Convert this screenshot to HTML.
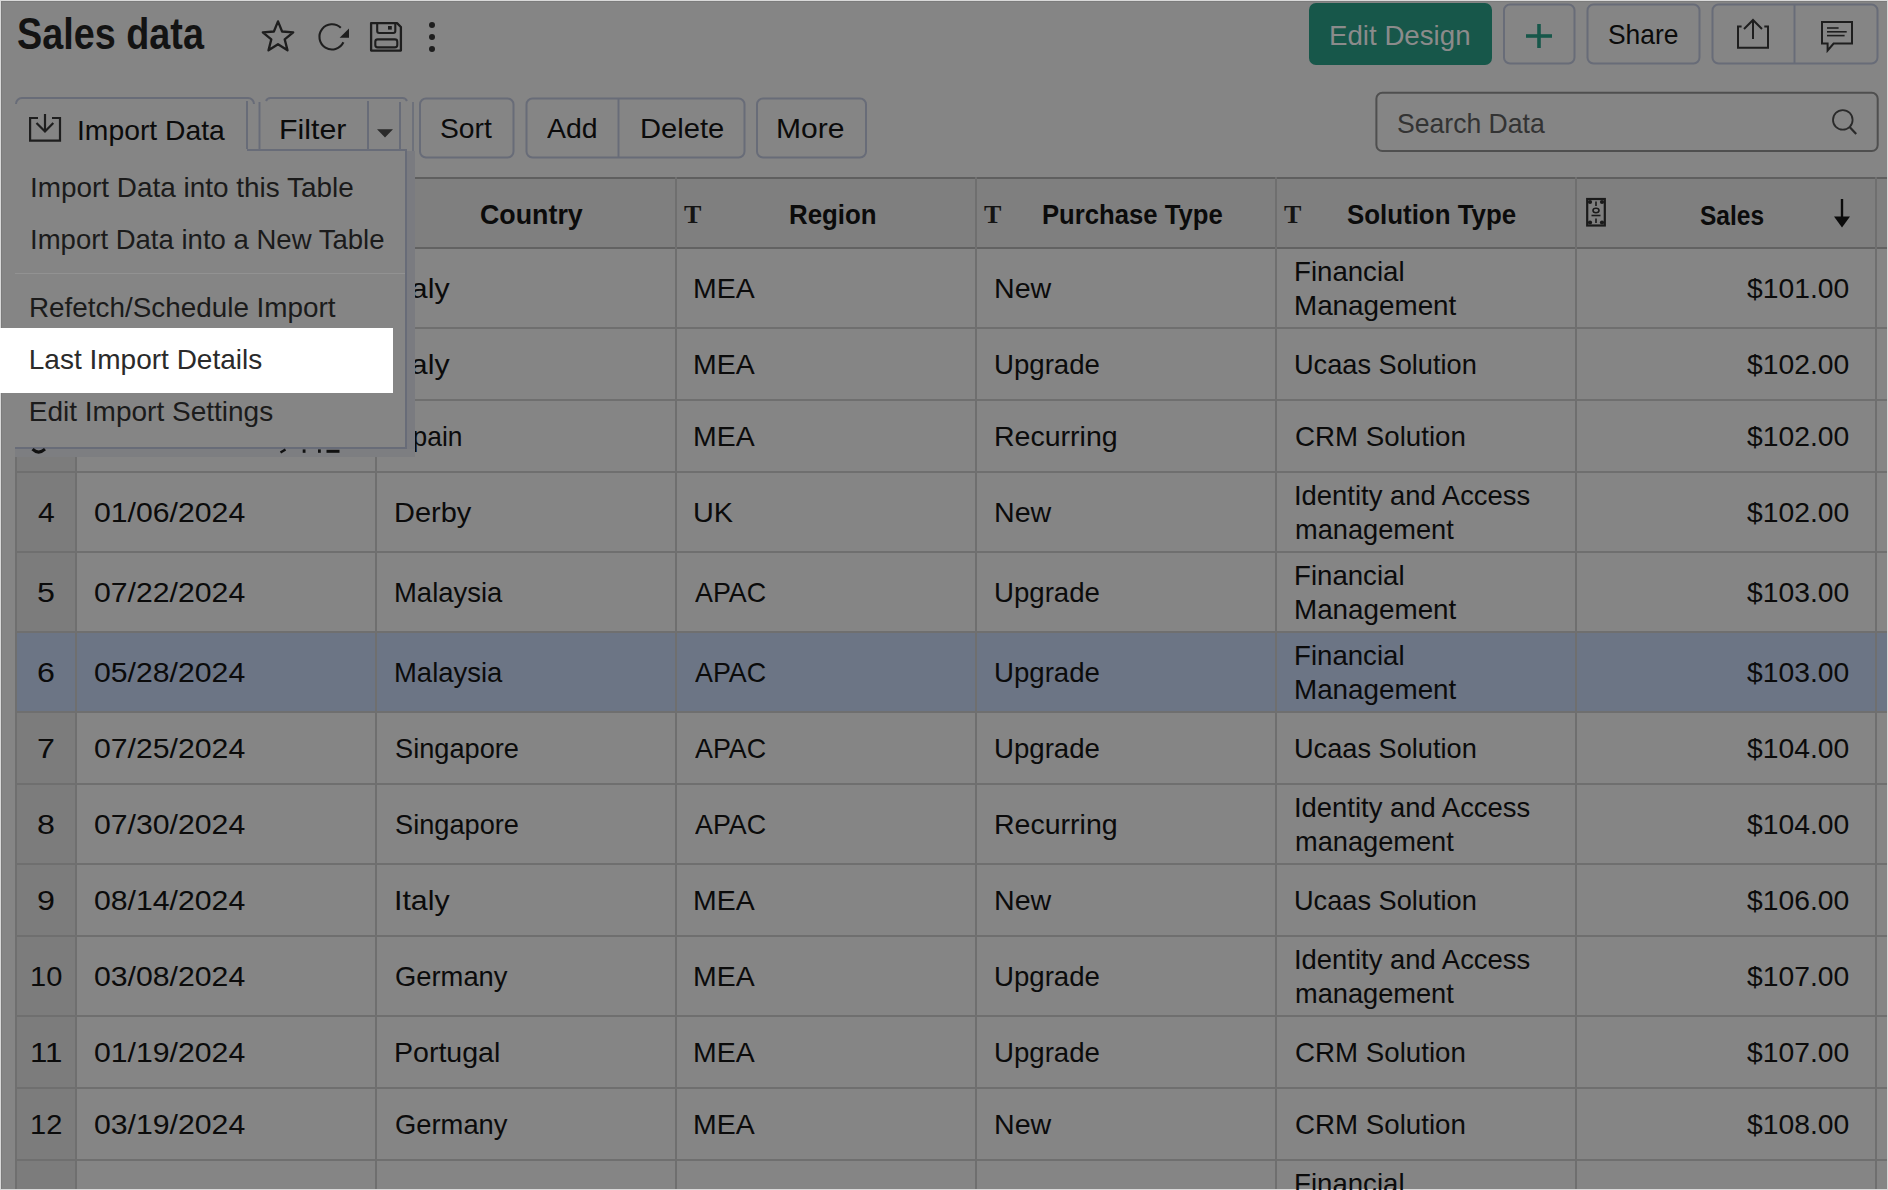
<!DOCTYPE html>
<html><head><meta charset="utf-8">
<style>
html,body{margin:0;padding:0;}
body{width:1888px;height:1190px;position:relative;overflow:hidden;background:#d9d9d9;font-family:"Liberation Sans",sans-serif;}
.a{position:absolute;box-sizing:border-box;}
.t{position:absolute;white-space:nowrap;transform-origin:0 0;font-family:"Liberation Sans",sans-serif;}
.hl{position:absolute;left:0;height:2px;background:#6f6f6f;}
.vl{position:absolute;top:177px;width:2px;height:1012px;background:#6f6f6f;}
.btn{position:absolute;box-sizing:border-box;border:2px solid #686c78;border-radius:7px;}
svg{position:absolute;left:0;top:0;}
</style></head><body>
<!-- page (dimmed) -->
<div class="a" style="left:1px;top:1px;width:1886px;height:1188px;background:#858585;overflow:hidden;box-shadow:inset 1px 1px 0 #7b7b7b">
</div>

<!-- ============ TABLE ============ -->
<div class="a" style="left:15px;top:177px;width:1872px;height:1012px;overflow:hidden;z-index:1" id="tbl">
  <!-- header bg -->
  <div class="a" style="left:0;top:0;width:1872px;height:72px;background:#7f7f7f"></div>
  <!-- row number column bg -->
  <div class="a" style="left:0;top:72px;width:61px;height:1000px;background:#7c7c7c"></div>
  <!-- selected row -->
  <div class="a" style="left:0;top:456px;width:1872px;height:80px;background:#6c7585"></div>
  <!-- horizontal lines -->
  <div class="hl" style="top:0;width:1872px;background:#5f5f5f"></div>
  <div class="hl" style="top:70px;width:1872px;background:#626262"></div>
  <div class="hl" style="top:150px;width:1872px"></div>
  <div class="hl" style="top:222px;width:1872px"></div>
  <div class="hl" style="top:294px;width:1872px"></div>
  <div class="hl" style="top:374px;width:1872px"></div>
  <div class="hl" style="top:454px;width:1872px"></div>
  <div class="hl" style="top:534px;width:1872px"></div>
  <div class="hl" style="top:606px;width:1872px"></div>
  <div class="hl" style="top:686px;width:1872px"></div>
  <div class="hl" style="top:758px;width:1872px"></div>
  <div class="hl" style="top:838px;width:1872px"></div>
  <div class="hl" style="top:910px;width:1872px"></div>
  <div class="hl" style="top:982px;width:1872px"></div>
  <!-- vertical lines -->
  <div class="vl" style="left:0;top:0"></div>
  <div class="vl" style="left:60px;top:0"></div>
  <div class="vl" style="left:360px;top:0"></div>
  <div class="vl" style="left:660px;top:0"></div>
  <div class="vl" style="left:960px;top:0"></div>
  <div class="vl" style="left:1260px;top:0"></div>
  <div class="vl" style="left:1560px;top:0"></div>
  <div class="vl" style="left:1860px;top:0"></div>
</div>

<!-- header icons -->
<div class="t" style="left:684px;top:202px;font-family:'Liberation Serif',serif;font-weight:700;font-size:26px;line-height:26px;color:#141414;z-index:2">T</div>
<div class="t" style="left:984px;top:202px;font-family:'Liberation Serif',serif;font-weight:700;font-size:26px;line-height:26px;color:#141414;z-index:2">T</div>
<div class="t" style="left:1284px;top:202px;font-family:'Liberation Serif',serif;font-weight:700;font-size:26px;line-height:26px;color:#141414;z-index:2">T</div>
<svg width="1888" height="1190" style="z-index:2">
  <!-- money icon -->
  <rect x="1587.2" y="199" width="17.6" height="26.5" fill="none" stroke="#1a1a1a" stroke-width="2.2"/>
  <circle cx="1590" cy="202" r="2.1" fill="#1a1a1a"/><circle cx="1602" cy="202" r="2.1" fill="#1a1a1a"/>
  <circle cx="1590" cy="222.5" r="2.1" fill="#1a1a1a"/><circle cx="1602" cy="222.5" r="2.1" fill="#1a1a1a"/>
  <line x1="1596" y1="201.5" x2="1596" y2="206" stroke="#1a1a1a" stroke-width="1.6"/>
  <ellipse cx="1596" cy="210.5" rx="3" ry="2.2" fill="none" stroke="#1a1a1a" stroke-width="1.6"/>
  <line x1="1591.5" y1="215.5" x2="1600.5" y2="215.5" stroke="#1a1a1a" stroke-width="1.6"/>
  <line x1="1596" y1="218.5" x2="1596" y2="223" stroke="#1a1a1a" stroke-width="1.6"/>
  <!-- sort arrow -->
  <line x1="1842" y1="199" x2="1842" y2="219" stroke="#0b0b0b" stroke-width="2.4"/>
  <polygon points="1834,216.5 1850,216.5 1842,227.5" fill="#0b0b0b"/>
</svg>

<!-- ============ TOP BAR ============ -->
<svg width="1888" height="1190" style="z-index:3">
  <!-- star -->
  <polygon points="278.0,21.4 282.1,31.5 293.2,32.3 284.7,39.4 287.5,50.3 278.0,44.2 268.5,50.3 271.3,39.4 262.8,32.3 273.9,31.5" fill="none" stroke="#1e1e1e" stroke-width="2.3" stroke-linejoin="round"/>
  <!-- refresh -->
  <path d="M343.4,42.3 A12.6,12.6 0 1 1 340.8,27.8" fill="none" stroke="#1e1e1e" stroke-width="2.1"/>
  <polygon points="349,28.4 349,37.8 339.6,37.8" fill="#1e1e1e"/>
  <!-- save -->
  <path d="M371.1,23.1 H397 L400.9,27 V50.6 H371.1 Z" fill="none" stroke="#1e1e1e" stroke-width="2.3" stroke-linejoin="round"/>
  <path d="M377.2,23.1 V31 a2,2 0 0 0 2,2 H393.3 a2,2 0 0 0 2,-2 V23.1" fill="none" stroke="#1e1e1e" stroke-width="2.1"/>
  <rect x="388" y="26" width="3.8" height="3.6" fill="#1e1e1e"/>
  <rect x="375.3" y="39.4" width="22" height="8" rx="2.4" fill="none" stroke="#1e1e1e" stroke-width="2.1"/>
  <!-- dots -->
  <circle cx="432" cy="25" r="3" fill="#1e1e1e"/>
  <circle cx="432" cy="37" r="3" fill="#1e1e1e"/>
  <circle cx="432" cy="49" r="3" fill="#1e1e1e"/>
  <!-- Edit design button -->
  <rect x="1309" y="3" width="183" height="62" rx="7" fill="#17574a"/>
  <!-- plus button -->
  <rect x="1504" y="4.5" width="70.5" height="59" rx="6" fill="none" stroke="#686c78" stroke-width="2"/>
  <line x1="1526" y1="36" x2="1552" y2="36" stroke="#17574a" stroke-width="3.6"/>
  <line x1="1539" y1="24" x2="1539" y2="48" stroke="#17574a" stroke-width="3.6"/>
  <!-- share -->
  <rect x="1587.5" y="4.5" width="112" height="59" rx="6" fill="none" stroke="#686c78" stroke-width="2"/>
  <!-- icon group -->
  <rect x="1712.5" y="4.5" width="165" height="59" rx="6" fill="none" stroke="#686c78" stroke-width="2"/>
  <line x1="1794.5" y1="4" x2="1794.5" y2="64" stroke="#686c78" stroke-width="2"/>
  <!-- export icon -->
  <path d="M1741.6,26.5 H1738 V47.8 H1768 V26.5 H1764.3" fill="none" stroke="#1e1e1e" stroke-width="2"/>
  <line x1="1753" y1="20" x2="1753" y2="39" stroke="#1e1e1e" stroke-width="2"/>
  <path d="M1744,29 L1753,20 L1762,29" fill="none" stroke="#1e1e1e" stroke-width="2"/>
  <!-- comment icon -->
  <path d="M1822,22 H1852 V43.5 H1833.6 L1827.6,50.5 V43.5 H1822 Z" fill="none" stroke="#1e1e1e" stroke-width="2"/>
  <line x1="1827" y1="28" x2="1838.6" y2="28" stroke="#1e1e1e" stroke-width="1.6"/>
  <line x1="1827" y1="31.8" x2="1846.7" y2="31.8" stroke="#1e1e1e" stroke-width="1.6"/>
  <line x1="1827" y1="35.6" x2="1844.6" y2="35.6" stroke="#1e1e1e" stroke-width="1.6"/>

  <!-- toolbar buttons -->
  <rect x="420" y="98.5" width="93.5" height="59" rx="6" fill="none" stroke="#686c78" stroke-width="2"/>
  <rect x="526.5" y="98.5" width="218" height="59" rx="6" fill="none" stroke="#686c78" stroke-width="2"/>
  <line x1="618.5" y1="98" x2="618.5" y2="158" stroke="#686c78" stroke-width="2"/>
  <rect x="757" y="98.5" width="109" height="59" rx="6" fill="none" stroke="#686c78" stroke-width="2"/>
  <!-- filter group (bottom hidden by menu) -->
  <path d="M266,101 a5,5 0 0 1 5,-3 H402 a5,5 0 0 1 5,3" fill="none" stroke="#686c78" stroke-width="2"/>
  <line x1="259.5" y1="102" x2="259.5" y2="151" stroke="#686c78" stroke-width="2"/>
  <line x1="400" y1="102" x2="400" y2="151" stroke="#686c78" stroke-width="2"/>
  <line x1="413" y1="102" x2="413" y2="158" stroke="#686c78" stroke-width="1.6"/>
  <line x1="368" y1="101" x2="368" y2="151" stroke="#686c78" stroke-width="2"/>
  <polygon points="377,129.2 393,129.2 385,137.6" fill="#2a2a2a"/>
  <!-- import data button (active) -->
  <path d="M16,104 a6,6 0 0 1 6,-6 H248 a6,6 0 0 1 6,6" fill="none" stroke="#686c78" stroke-width="2"/>
  <line x1="247" y1="101" x2="247" y2="151" stroke="#686c78" stroke-width="2"/>
  <!-- import icon -->
  <path d="M38,118 H30.1 V140.6 H60 V118 H52" fill="none" stroke="#1e1e1e" stroke-width="2.2"/>
  <line x1="45" y1="114" x2="45" y2="131" stroke="#1e1e1e" stroke-width="2.2"/>
  <path d="M36.5,123 L45,131.5 L53.3,123" fill="none" stroke="#1e1e1e" stroke-width="2.2"/>
  <!-- search -->
  <rect x="1376.4" y="92.7" width="501.3" height="58.4" rx="6" fill="none" stroke="#4f4f4f" stroke-width="2"/>
  <circle cx="1842.8" cy="119.9" r="9.8" fill="none" stroke="#2a2a2a" stroke-width="1.8"/>
  <line x1="1849.6" y1="127" x2="1856.2" y2="134" stroke="#2a2a2a" stroke-width="2.2"/>
</svg>

<!-- ============ MENU ============ -->
<div class="a" style="left:15px;top:149px;width:392px;height:300px;background:#858585;z-index:4;box-shadow:0 0 0 0 transparent"></div>
<div class="a" style="left:407px;top:151px;width:8px;height:306px;background:#7a7b80;z-index:4"></div>
<div class="a" style="left:15px;top:449px;width:400px;height:8px;background:#7d7e81;z-index:4"></div>
<div class="a" style="left:247px;top:149px;width:160px;height:2px;background:#686c78;z-index:5"></div>
<div class="a" style="left:405px;top:149px;width:2px;height:300px;background:#686c78;z-index:5"></div>
<div class="a" style="left:15px;top:447px;width:392px;height:2px;background:#686c78;z-index:5"></div>
<div class="a" style="left:15px;top:273px;width:390px;height:1px;background:#929292;z-index:5"></div>
<svg width="1888" height="1190" style="z-index:5">
  <path d="M32.5,449.2 Q38.5,455 45,449.2" fill="none" stroke="#111" stroke-width="3"/>
  <line x1="280.5" y1="452.6" x2="285.5" y2="449.4" stroke="#111" stroke-width="2.4"/>
  <rect x="302.7" y="449.4" width="2.8" height="3.4" fill="#111"/>
  <rect x="318" y="449.4" width="2.8" height="3.4" fill="#111"/>
  <rect x="326.5" y="449.8" width="13" height="3" fill="#111"/>
</svg>
<!-- highlighted item -->
<div class="a" style="left:0;top:328px;width:393px;height:65px;background:#ffffff;z-index:6"></div>

<!-- ============ TEXTS ============ -->
<div class="t" style="left:16.54px;top:11.65px;font-size:44px;line-height:44px;color:#131313;z-index:3;font-weight:700;transform:scaleX(0.8586)">Sales data</div>
<div class="t" style="left:1329.42px;top:21.6px;font-size:28px;line-height:28px;color:#8b8b8b;z-index:3;transform:scaleX(0.9884)">Edit Design</div>
<div class="t" style="left:1607.86px;top:20.9px;font-size:28px;line-height:28px;color:#0b0b0b;z-index:3;transform:scaleX(0.9433)">Share</div>
<div class="t" style="left:76.58px;top:117.3px;font-size:28px;line-height:28px;color:#0b0b0b;z-index:3;transform:scaleX(1.0103)">Import Data</div>
<div class="t" style="left:278.64px;top:116.1px;font-size:28px;line-height:28px;color:#0b0b0b;z-index:3;transform:scaleX(1.0819)">Filter</div>
<div class="t" style="left:439.79px;top:115.1px;font-size:28px;line-height:28px;color:#0b0b0b;z-index:3;transform:scaleX(1.0085)">Sort</div>
<div class="t" style="left:546.8px;top:115.1px;font-size:28px;line-height:28px;color:#0b0b0b;z-index:3;transform:scaleX(1.0156)">Add</div>
<div class="t" style="left:639.72px;top:115.1px;font-size:28px;line-height:28px;color:#0b0b0b;z-index:3;transform:scaleX(1.0413)">Delete</div>
<div class="t" style="left:776.35px;top:115.1px;font-size:28px;line-height:28px;color:#0b0b0b;z-index:3;transform:scaleX(1.0732)">More</div>
<div class="t" style="left:1396.65px;top:110px;font-size:28px;line-height:28px;color:#333333;z-index:3;transform:scaleX(0.9493)">Search Data</div>
<div class="t" style="left:479.64px;top:201.3px;font-size:28px;line-height:28px;color:#0b0b0b;z-index:3;font-weight:700;transform:scaleX(0.9574)">Country</div>
<div class="t" style="left:788.68px;top:201.3px;font-size:28px;line-height:28px;color:#0b0b0b;z-index:3;font-weight:700;transform:scaleX(0.9226)">Region</div>
<div class="t" style="left:1041.58px;top:201.3px;font-size:28px;line-height:28px;color:#0b0b0b;z-index:3;font-weight:700;transform:scaleX(0.9169)">Purchase Type</div>
<div class="t" style="left:1347.2px;top:201.3px;font-size:28px;line-height:28px;color:#0b0b0b;z-index:3;font-weight:700;transform:scaleX(0.9241)">Solution Type</div>
<div class="t" style="left:1700.2px;top:201.5px;font-size:28px;line-height:28px;color:#0b0b0b;z-index:3;font-weight:700;transform:scaleX(0.8760)">Sales</div>
<div class="t" style="left:35.57px;top:274.7px;font-size:28px;line-height:28px;color:#0b0b0b;z-index:3;transform:scaleX(1.2385)">1</div>
<div class="t" style="left:393.64px;top:274.7px;font-size:28px;line-height:28px;color:#0b0b0b;z-index:3;transform:scaleX(1.0820)">Italy</div>
<div class="t" style="left:693.27px;top:274.7px;font-size:28px;line-height:28px;color:#0b0b0b;z-index:3;transform:scaleX(1.0153)">MEA</div>
<div class="t" style="left:993.76px;top:274.7px;font-size:28px;line-height:28px;color:#0b0b0b;z-index:3;transform:scaleX(1.0220)">New</div>
<div class="t" style="left:1294.13px;top:258px;font-size:28px;line-height:28px;color:#0b0b0b;z-index:3;transform:scaleX(0.9868)">Financial</div>
<div class="t" style="left:1294.11px;top:292.1px;font-size:28px;line-height:28px;color:#0b0b0b;z-index:3;transform:scaleX(0.9929)">Management</div>
<div class="t" style="left:1747.4px;top:274.7px;font-size:28px;line-height:28px;color:#0b0b0b;z-index:3;transform:scaleX(1.0095)">$101.00</div>
<div class="t" style="left:36.9px;top:350.7px;font-size:28px;line-height:28px;color:#0b0b0b;z-index:3;transform:scaleX(1.1500)">2</div>
<div class="t" style="left:393.64px;top:350.7px;font-size:28px;line-height:28px;color:#0b0b0b;z-index:3;transform:scaleX(1.0820)">Italy</div>
<div class="t" style="left:693.27px;top:350.7px;font-size:28px;line-height:28px;color:#0b0b0b;z-index:3;transform:scaleX(1.0153)">MEA</div>
<div class="t" style="left:993.83px;top:350.7px;font-size:28px;line-height:28px;color:#0b0b0b;z-index:3;transform:scaleX(0.9863)">Upgrade</div>
<div class="t" style="left:1294.16px;top:350.7px;font-size:28px;line-height:28px;color:#0b0b0b;z-index:3;transform:scaleX(0.9705)">Ucaas Solution</div>
<div class="t" style="left:1747.4px;top:350.7px;font-size:28px;line-height:28px;color:#0b0b0b;z-index:3;transform:scaleX(1.0095)">$102.00</div>
<div class="t" style="left:36.9px;top:422.7px;font-size:28px;line-height:28px;color:#0b0b0b;z-index:3;transform:scaleX(1.1500)">3</div>
<div class="t" style="left:394.86px;top:422.7px;font-size:28px;line-height:28px;color:#0b0b0b;z-index:3;transform:scaleX(0.9415)">Spain</div>
<div class="t" style="left:693.27px;top:422.7px;font-size:28px;line-height:28px;color:#0b0b0b;z-index:3;transform:scaleX(1.0153)">MEA</div>
<div class="t" style="left:993.76px;top:422.7px;font-size:28px;line-height:28px;color:#0b0b0b;z-index:3;transform:scaleX(1.0186)">Recurring</div>
<div class="t" style="left:1295.11px;top:422.7px;font-size:28px;line-height:28px;color:#0b0b0b;z-index:3;transform:scaleX(0.9891)">CRM Solution</div>
<div class="t" style="left:1747.4px;top:422.7px;font-size:28px;line-height:28px;color:#0b0b0b;z-index:3;transform:scaleX(1.0095)">$102.00</div>
<div class="t" style="left:38.05px;top:498.7px;font-size:28px;line-height:28px;color:#0b0b0b;z-index:3;transform:scaleX(1.0733)">4</div>
<div class="t" style="left:94.22px;top:498.7px;font-size:28px;line-height:28px;color:#0b0b0b;z-index:3;transform:scaleX(1.0789)">01/06/2024</div>
<div class="t" style="left:393.73px;top:498.7px;font-size:28px;line-height:28px;color:#0b0b0b;z-index:3;transform:scaleX(1.0345)">Derby</div>
<div class="t" style="left:693.24px;top:498.7px;font-size:28px;line-height:28px;color:#0b0b0b;z-index:3;transform:scaleX(1.0290)">UK</div>
<div class="t" style="left:993.76px;top:498.7px;font-size:28px;line-height:28px;color:#0b0b0b;z-index:3;transform:scaleX(1.0220)">New</div>
<div class="t" style="left:1294.14px;top:482px;font-size:28px;line-height:28px;color:#0b0b0b;z-index:3;transform:scaleX(0.9792)">Identity and Access</div>
<div class="t" style="left:1295.13px;top:516.1px;font-size:28px;line-height:28px;color:#0b0b0b;z-index:3;transform:scaleX(0.9714)">management</div>
<div class="t" style="left:1747.4px;top:498.7px;font-size:28px;line-height:28px;color:#0b0b0b;z-index:3;transform:scaleX(1.0095)">$102.00</div>
<div class="t" style="left:36.9px;top:578.7px;font-size:28px;line-height:28px;color:#0b0b0b;z-index:3;transform:scaleX(1.1500)">5</div>
<div class="t" style="left:94.22px;top:578.7px;font-size:28px;line-height:28px;color:#0b0b0b;z-index:3;transform:scaleX(1.0789)">07/22/2024</div>
<div class="t" style="left:393.84px;top:578.7px;font-size:28px;line-height:28px;color:#0b0b0b;z-index:3;transform:scaleX(0.9806)">Malaysia</div>
<div class="t" style="left:695.3px;top:578.7px;font-size:28px;line-height:28px;color:#0b0b0b;z-index:3;transform:scaleX(0.9588)">APAC</div>
<div class="t" style="left:993.83px;top:578.7px;font-size:28px;line-height:28px;color:#0b0b0b;z-index:3;transform:scaleX(0.9863)">Upgrade</div>
<div class="t" style="left:1294.13px;top:562px;font-size:28px;line-height:28px;color:#0b0b0b;z-index:3;transform:scaleX(0.9868)">Financial</div>
<div class="t" style="left:1294.11px;top:596.1px;font-size:28px;line-height:28px;color:#0b0b0b;z-index:3;transform:scaleX(0.9929)">Management</div>
<div class="t" style="left:1747.4px;top:578.7px;font-size:28px;line-height:28px;color:#0b0b0b;z-index:3;transform:scaleX(1.0095)">$103.00</div>
<div class="t" style="left:36.9px;top:658.7px;font-size:28px;line-height:28px;color:#0b0b0b;z-index:3;transform:scaleX(1.1500)">6</div>
<div class="t" style="left:94.22px;top:658.7px;font-size:28px;line-height:28px;color:#0b0b0b;z-index:3;transform:scaleX(1.0789)">05/28/2024</div>
<div class="t" style="left:393.84px;top:658.7px;font-size:28px;line-height:28px;color:#0b0b0b;z-index:3;transform:scaleX(0.9806)">Malaysia</div>
<div class="t" style="left:695.3px;top:658.7px;font-size:28px;line-height:28px;color:#0b0b0b;z-index:3;transform:scaleX(0.9588)">APAC</div>
<div class="t" style="left:993.83px;top:658.7px;font-size:28px;line-height:28px;color:#0b0b0b;z-index:3;transform:scaleX(0.9863)">Upgrade</div>
<div class="t" style="left:1294.13px;top:642px;font-size:28px;line-height:28px;color:#0b0b0b;z-index:3;transform:scaleX(0.9868)">Financial</div>
<div class="t" style="left:1294.11px;top:676.1px;font-size:28px;line-height:28px;color:#0b0b0b;z-index:3;transform:scaleX(0.9929)">Management</div>
<div class="t" style="left:1747.4px;top:658.7px;font-size:28px;line-height:28px;color:#0b0b0b;z-index:3;transform:scaleX(1.0095)">$103.00</div>
<div class="t" style="left:36.9px;top:734.7px;font-size:28px;line-height:28px;color:#0b0b0b;z-index:3;transform:scaleX(1.1500)">7</div>
<div class="t" style="left:94.22px;top:734.7px;font-size:28px;line-height:28px;color:#0b0b0b;z-index:3;transform:scaleX(1.0789)">07/25/2024</div>
<div class="t" style="left:394.83px;top:734.7px;font-size:28px;line-height:28px;color:#0b0b0b;z-index:3;transform:scaleX(0.9708)">Singapore</div>
<div class="t" style="left:695.3px;top:734.7px;font-size:28px;line-height:28px;color:#0b0b0b;z-index:3;transform:scaleX(0.9588)">APAC</div>
<div class="t" style="left:993.83px;top:734.7px;font-size:28px;line-height:28px;color:#0b0b0b;z-index:3;transform:scaleX(0.9863)">Upgrade</div>
<div class="t" style="left:1294.16px;top:734.7px;font-size:28px;line-height:28px;color:#0b0b0b;z-index:3;transform:scaleX(0.9705)">Ucaas Solution</div>
<div class="t" style="left:1747.4px;top:734.7px;font-size:28px;line-height:28px;color:#0b0b0b;z-index:3;transform:scaleX(1.0095)">$104.00</div>
<div class="t" style="left:36.9px;top:810.7px;font-size:28px;line-height:28px;color:#0b0b0b;z-index:3;transform:scaleX(1.1500)">8</div>
<div class="t" style="left:94.22px;top:810.7px;font-size:28px;line-height:28px;color:#0b0b0b;z-index:3;transform:scaleX(1.0789)">07/30/2024</div>
<div class="t" style="left:394.83px;top:810.7px;font-size:28px;line-height:28px;color:#0b0b0b;z-index:3;transform:scaleX(0.9708)">Singapore</div>
<div class="t" style="left:695.3px;top:810.7px;font-size:28px;line-height:28px;color:#0b0b0b;z-index:3;transform:scaleX(0.9588)">APAC</div>
<div class="t" style="left:993.76px;top:810.7px;font-size:28px;line-height:28px;color:#0b0b0b;z-index:3;transform:scaleX(1.0186)">Recurring</div>
<div class="t" style="left:1294.14px;top:794px;font-size:28px;line-height:28px;color:#0b0b0b;z-index:3;transform:scaleX(0.9792)">Identity and Access</div>
<div class="t" style="left:1295.13px;top:828.1px;font-size:28px;line-height:28px;color:#0b0b0b;z-index:3;transform:scaleX(0.9714)">management</div>
<div class="t" style="left:1747.4px;top:810.7px;font-size:28px;line-height:28px;color:#0b0b0b;z-index:3;transform:scaleX(1.0095)">$104.00</div>
<div class="t" style="left:36.9px;top:886.7px;font-size:28px;line-height:28px;color:#0b0b0b;z-index:3;transform:scaleX(1.1500)">9</div>
<div class="t" style="left:94.22px;top:886.7px;font-size:28px;line-height:28px;color:#0b0b0b;z-index:3;transform:scaleX(1.0789)">08/14/2024</div>
<div class="t" style="left:393.64px;top:886.7px;font-size:28px;line-height:28px;color:#0b0b0b;z-index:3;transform:scaleX(1.0820)">Italy</div>
<div class="t" style="left:693.27px;top:886.7px;font-size:28px;line-height:28px;color:#0b0b0b;z-index:3;transform:scaleX(1.0153)">MEA</div>
<div class="t" style="left:993.76px;top:886.7px;font-size:28px;line-height:28px;color:#0b0b0b;z-index:3;transform:scaleX(1.0220)">New</div>
<div class="t" style="left:1294.16px;top:886.7px;font-size:28px;line-height:28px;color:#0b0b0b;z-index:3;transform:scaleX(0.9705)">Ucaas Solution</div>
<div class="t" style="left:1747.4px;top:886.7px;font-size:28px;line-height:28px;color:#0b0b0b;z-index:3;transform:scaleX(1.0095)">$106.00</div>
<div class="t" style="left:30.33px;top:962.7px;font-size:28px;line-height:28px;color:#0b0b0b;z-index:3;transform:scaleX(1.0360)">10</div>
<div class="t" style="left:94.22px;top:962.7px;font-size:28px;line-height:28px;color:#0b0b0b;z-index:3;transform:scaleX(1.0789)">03/08/2024</div>
<div class="t" style="left:394.82px;top:962.7px;font-size:28px;line-height:28px;color:#0b0b0b;z-index:3;transform:scaleX(0.9768)">Germany</div>
<div class="t" style="left:693.27px;top:962.7px;font-size:28px;line-height:28px;color:#0b0b0b;z-index:3;transform:scaleX(1.0153)">MEA</div>
<div class="t" style="left:993.83px;top:962.7px;font-size:28px;line-height:28px;color:#0b0b0b;z-index:3;transform:scaleX(0.9863)">Upgrade</div>
<div class="t" style="left:1294.14px;top:946px;font-size:28px;line-height:28px;color:#0b0b0b;z-index:3;transform:scaleX(0.9792)">Identity and Access</div>
<div class="t" style="left:1295.13px;top:980.1px;font-size:28px;line-height:28px;color:#0b0b0b;z-index:3;transform:scaleX(0.9714)">management</div>
<div class="t" style="left:1747.4px;top:962.7px;font-size:28px;line-height:28px;color:#0b0b0b;z-index:3;transform:scaleX(1.0095)">$107.00</div>
<div class="t" style="left:30.17px;top:1038.7px;font-size:28px;line-height:28px;color:#0b0b0b;z-index:3;transform:scaleX(1.1172)">11</div>
<div class="t" style="left:94.22px;top:1038.7px;font-size:28px;line-height:28px;color:#0b0b0b;z-index:3;transform:scaleX(1.0789)">01/19/2024</div>
<div class="t" style="left:393.76px;top:1038.7px;font-size:28px;line-height:28px;color:#0b0b0b;z-index:3;transform:scaleX(1.0191)">Portugal</div>
<div class="t" style="left:693.27px;top:1038.7px;font-size:28px;line-height:28px;color:#0b0b0b;z-index:3;transform:scaleX(1.0153)">MEA</div>
<div class="t" style="left:993.83px;top:1038.7px;font-size:28px;line-height:28px;color:#0b0b0b;z-index:3;transform:scaleX(0.9863)">Upgrade</div>
<div class="t" style="left:1295.11px;top:1038.7px;font-size:28px;line-height:28px;color:#0b0b0b;z-index:3;transform:scaleX(0.9891)">CRM Solution</div>
<div class="t" style="left:1747.4px;top:1038.7px;font-size:28px;line-height:28px;color:#0b0b0b;z-index:3;transform:scaleX(1.0095)">$107.00</div>
<div class="t" style="left:30.33px;top:1110.7px;font-size:28px;line-height:28px;color:#0b0b0b;z-index:3;transform:scaleX(1.0360)">12</div>
<div class="t" style="left:94.22px;top:1110.7px;font-size:28px;line-height:28px;color:#0b0b0b;z-index:3;transform:scaleX(1.0789)">03/19/2024</div>
<div class="t" style="left:394.82px;top:1110.7px;font-size:28px;line-height:28px;color:#0b0b0b;z-index:3;transform:scaleX(0.9768)">Germany</div>
<div class="t" style="left:693.27px;top:1110.7px;font-size:28px;line-height:28px;color:#0b0b0b;z-index:3;transform:scaleX(1.0153)">MEA</div>
<div class="t" style="left:993.76px;top:1110.7px;font-size:28px;line-height:28px;color:#0b0b0b;z-index:3;transform:scaleX(1.0220)">New</div>
<div class="t" style="left:1295.11px;top:1110.7px;font-size:28px;line-height:28px;color:#0b0b0b;z-index:3;transform:scaleX(0.9891)">CRM Solution</div>
<div class="t" style="left:1747.4px;top:1110.7px;font-size:28px;line-height:28px;color:#0b0b0b;z-index:3;transform:scaleX(1.0095)">$108.00</div>
<div class="t" style="left:30.33px;top:1186.7px;font-size:28px;line-height:28px;color:#0b0b0b;z-index:3;transform:scaleX(1.0360)">13</div>
<div class="t" style="left:94.2px;top:1186.7px;font-size:28px;line-height:28px;color:#0b0b0b;z-index:3;transform:scaleX(1.0953)">02/11/2024</div>
<div class="t" style="left:393.64px;top:1186.7px;font-size:28px;line-height:28px;color:#0b0b0b;z-index:3;transform:scaleX(1.0820)">Italy</div>
<div class="t" style="left:693.27px;top:1186.7px;font-size:28px;line-height:28px;color:#0b0b0b;z-index:3;transform:scaleX(1.0153)">MEA</div>
<div class="t" style="left:993.76px;top:1186.7px;font-size:28px;line-height:28px;color:#0b0b0b;z-index:3;transform:scaleX(1.0220)">New</div>
<div class="t" style="left:1294.13px;top:1170px;font-size:28px;line-height:28px;color:#0b0b0b;z-index:3;transform:scaleX(0.9868)">Financial</div>
<div class="t" style="left:1294.11px;top:1204.1px;font-size:28px;line-height:28px;color:#0b0b0b;z-index:3;transform:scaleX(0.9929)">Management</div>
<div class="t" style="left:1747.4px;top:1186.7px;font-size:28px;line-height:28px;color:#0b0b0b;z-index:3;transform:scaleX(1.0095)">$108.00</div>
<div class="t" style="left:29.61px;top:174.3px;font-size:28px;line-height:28px;color:#1b1b1b;z-index:5;transform:scaleX(0.9966)">Import Data into this Table</div>
<div class="t" style="left:29.63px;top:226.3px;font-size:28px;line-height:28px;color:#1b1b1b;z-index:5;transform:scaleX(0.9833)">Import Data into a New Table</div>
<div class="t" style="left:28.61px;top:294.3px;font-size:28px;line-height:28px;color:#1b1b1b;z-index:5;transform:scaleX(0.9948)">Refetch/Schedule Import</div>
<div class="t" style="left:28.8px;top:346.3px;font-size:28px;line-height:28px;color:#2a2a2a;z-index:7">Last Import Details</div>
<div class="t" style="left:28.8px;top:398.3px;font-size:28px;line-height:28px;color:#1b1b1b;z-index:5">Edit Import Settings</div>
</body></html>
